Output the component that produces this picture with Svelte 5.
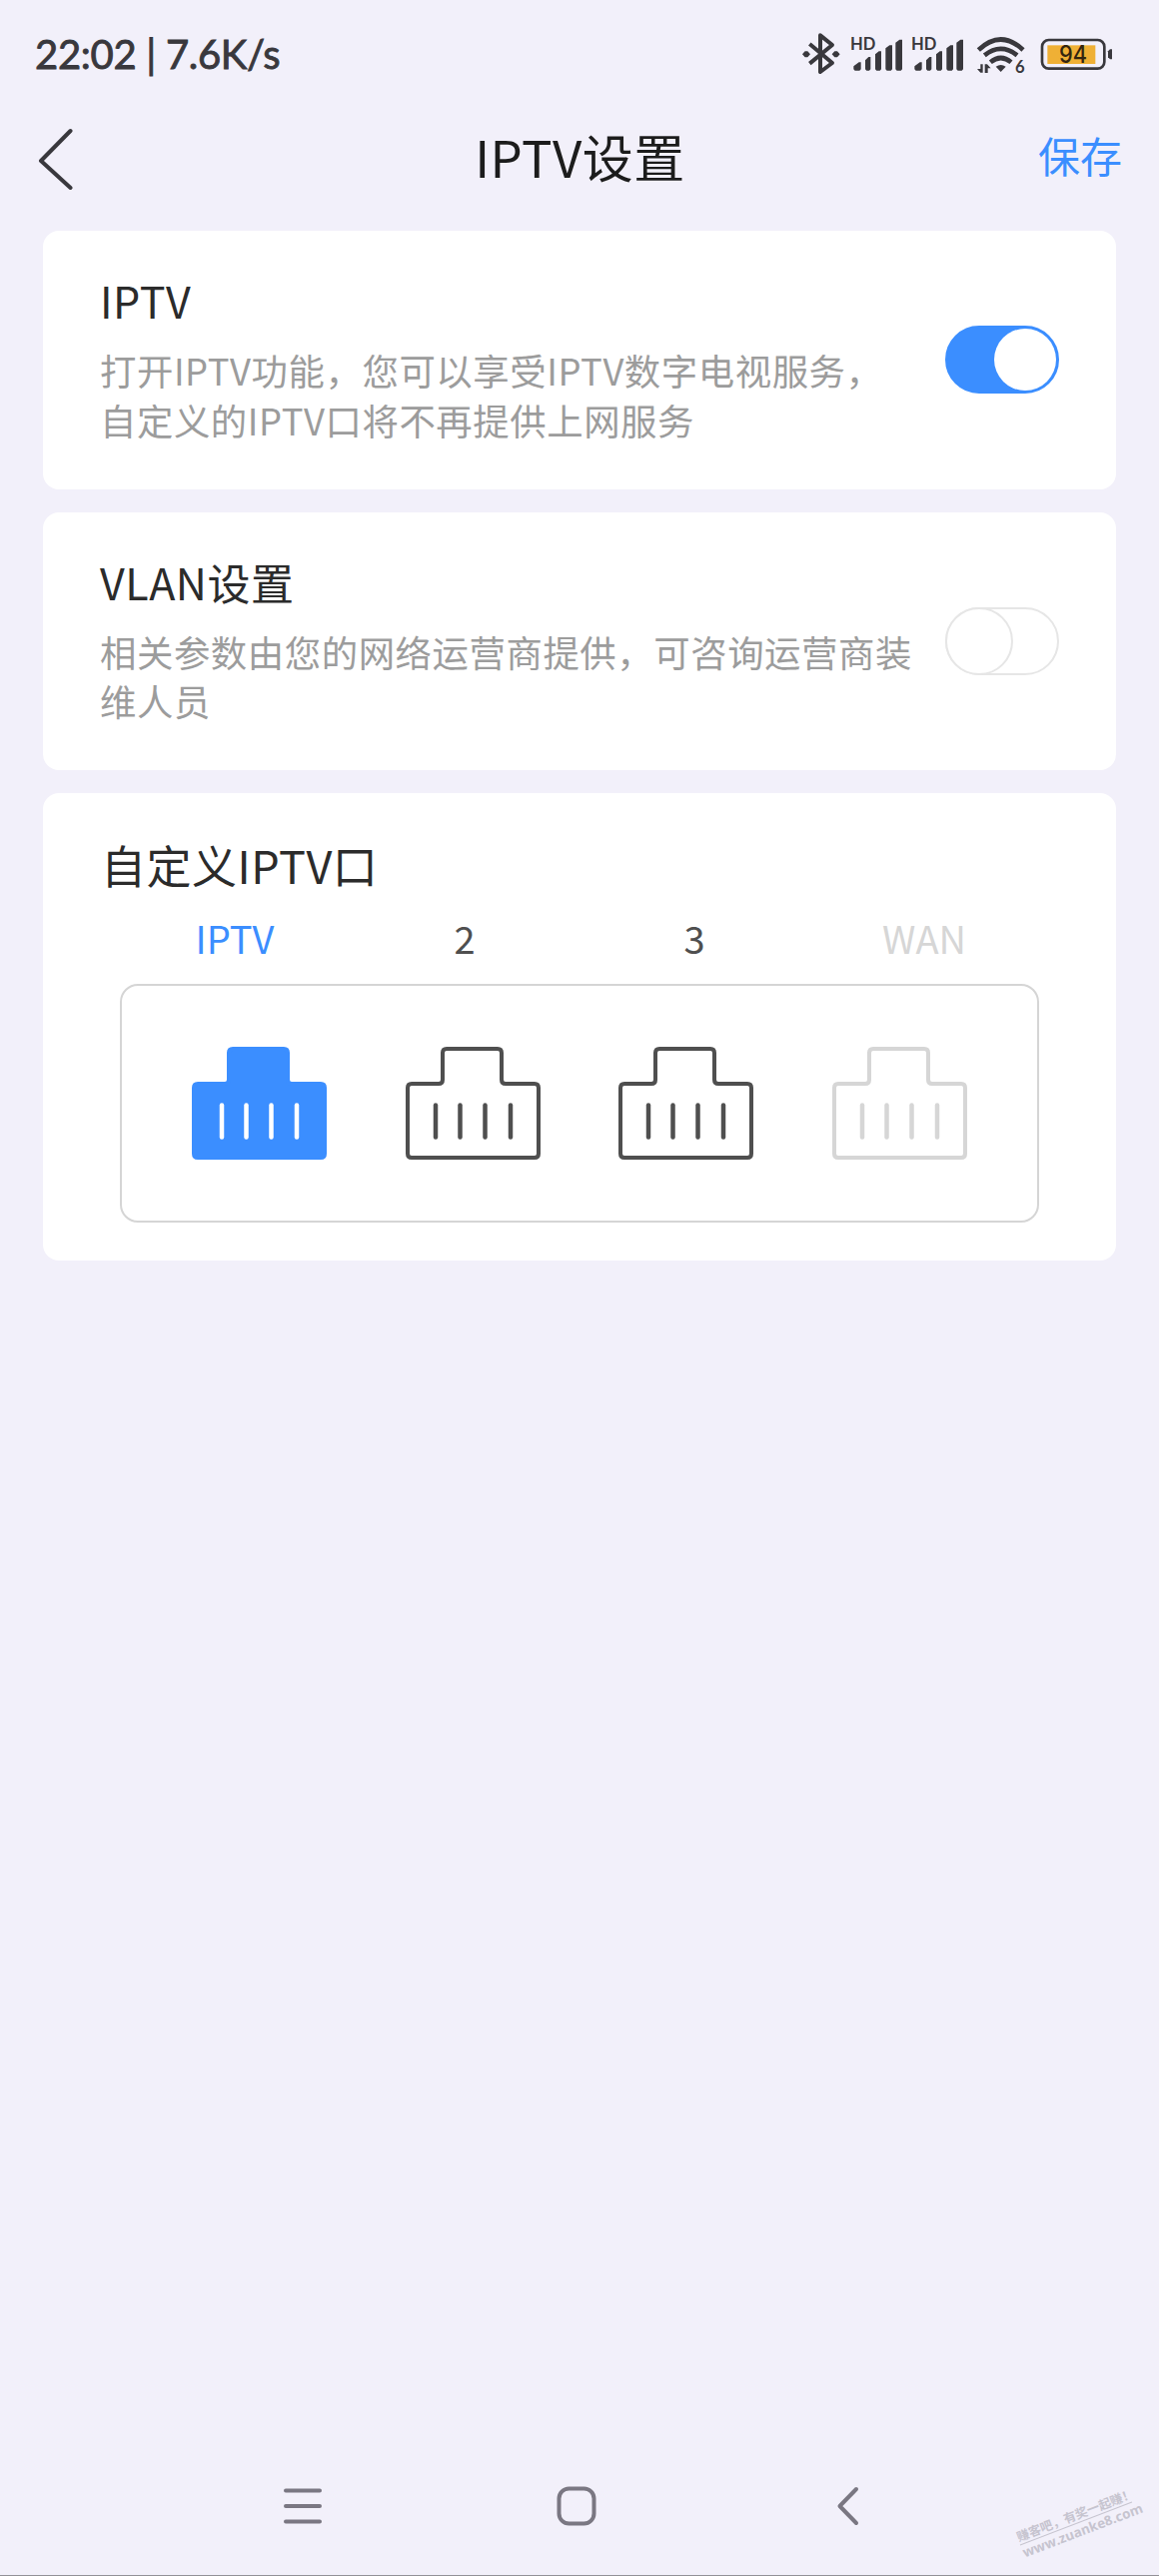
<script lang="ts">
  let iptvEnabled = $state(true);
  let vlanEnabled = $state(false);

  type Port = { label: string; disabled: boolean };

  const ports: Port[] = [
    { label: "IPTV", disabled: false },
    { label: "2", disabled: false },
    { label: "3", disabled: false },
    { label: "WAN", disabled: true },
  ];
  let selected = $state("IPTV");

  const pins = [30, 54.5, 79.5, 105];

  function portState(port: Port) {
    if (port.disabled) return "disabled";
    return port.label === selected ? "active" : "";
  }
</script>

{#snippet signal()}
  <svg viewBox="212 40 160 126" width="53.33" height="42">
    <text x="212" y="92" font-size="50" font-weight="700" textLength="76" lengthAdjust="spacingAndGlyphs">HD</text>
    <path
      d="M222 149V140L238 128H244V149L240 153H226ZM257 149V122L267 112H273V149L269 153H261ZM287 149V104L298 95H305V149L301 153H291ZM318 149V86L330 77H338V149L334 153H322ZM348 149V69L360 60H368V149L364 153H352Z"
    />
  </svg>
{/snippet}

{#snippet toggle(on: boolean, label: string, flip: () => void)}
  <button class="toggle" class:on role="switch" aria-checked={on} aria-label={label} onclick={flip}>
    <span class="knob"></span>
  </button>
{/snippet}

<div class="screen">
  <div class="status">
    <span class="clock">22:02 | 7.6K/s</span>
    <div class="tray">
      <svg viewBox="68 40 119 126" width="39.67" height="42">
        <path
          d="M90 73L158 130L122 157V47L158 76L90 132"
          fill="none"
          stroke="currentColor"
          stroke-width="12"
          stroke-linejoin="round"
        />
        <path d="M68 104L76 95H84L92 104L84 113H76ZM157 104L165 95H173L181 104L173 113H165Z" />
      </svg>
      {@render signal()}
      {@render signal()}
      <svg viewBox="582 40 175 126" width="58.33" height="42">
        <g fill="none" stroke="currentColor" stroke-width="14">
          <path d="M598 91Q665 28 732 91" />
          <path d="M616 107Q665 68 714 107" />
          <path d="M634 128Q665 102 696 128" />
        </g>
        <path d="M650 141Q665 131 680 141L665 157Z" />
        <path d="M604 134H611V159H604L594 148H604ZM617 134H624L635 146H626V160H617Z" />
        <text x="708" y="159" font-size="50" font-weight="700">6</text>
      </svg>
      <svg viewBox="782 40 220 126" width="73.33" height="42">
        <rect x="788" y="61" width="187" height="86" rx="20" fill="none" stroke="currentColor" stroke-width="8" />
        <rect x="804" y="77" width="144" height="56" fill="#efb035" />
        <path d="M986 95L992 89H998V119H992L986 113Z" />
        <text class="level" x="839" y="131" font-size="73" textLength="84" lengthAdjust="spacingAndGlyphs">94</text>
      </svg>
    </div>
  </div>

  <header>
    <button class="back" aria-label="返回">
      <svg viewBox="0 0 36 62" width="36" height="62">
        <path d="M32.500 3L3 33L32.500 60" />
      </svg>
    </button>
    <h1>IPTV设置</h1>
    <button class="save">保存</button>
  </header>

  <main>
    <section class="card row">
      <div class="text">
        <h2>IPTV</h2>
        <p>打开IPTV功能，您可以享受IPTV数字电视服务，自定义的IPTV口将不再提供上网服务</p>
      </div>
      {@render toggle(iptvEnabled, "IPTV", () => (iptvEnabled = !iptvEnabled))}
    </section>

    <section class="card row">
      <div class="text">
        <h2>VLAN设置</h2>
        <p>相关参数由您的网络运营商提供，可咨询运营商装维人员</p>
      </div>
      {@render toggle(vlanEnabled, "VLAN设置", () => (vlanEnabled = !vlanEnabled))}
    </section>

    <section class="card ports">
      <h2>自定义IPTV口</h2>
      <div class="labels">
        {#each ports as port}
          <span class={portState(port)}>{port.label}</span>
        {/each}
      </div>
      <div class="panel">
        {#each ports as port}
          <button
            class="port {portState(port)}"
            aria-label={port.label}
            disabled={port.disabled}
            onclick={() => (selected = port.label)}
          >
            <svg viewBox="0 0 135 113" width="135" height="113">
              <path
                class="shell"
                d="M41 2H92Q96 2 96 6V33Q96 37 100 37H129Q133 37 133 41V107Q133 111 129 111H6Q2 111 2 107V41Q2 37 6 37H33Q37 37 37 33V6Q37 2 41 2Z"
              />
              {#each pins as x}
                <path class="pin" d="M{x} 58.500V90.500" />
              {/each}
            </svg>
          </button>
        {/each}
      </div>
    </section>
  </main>

  <nav>
    <svg viewBox="0 0 40 40" width="40" height="40">
      <path d="M3 4.500H37M3 20H37M3 35.500H37" />
    </svg>
    <svg viewBox="0 0 40 40" width="40" height="40">
      <rect x="2.500" y="2.500" width="35" height="35" rx="10" />
    </svg>
    <svg viewBox="0 0 40 40" width="40" height="40">
      <path d="M26 3L9.500 20L26 37" />
    </svg>
  </nav>

  <div class="watermark">
    <span>赚客吧，有奖一起赚！</span>
    <span class="site">www.zuanke8.com</span>
  </div>
</div>

<style>
  :global(body) {
    background: #f2f0fa;
  }

  .screen {
    position: relative;
    box-sizing: border-box;
    width: 1160px;
    height: 2579px;
    display: flex;
    flex-direction: column;
    overflow: hidden;
    background: #f2f0fa;
    border-bottom: 1px solid #929197;
    font-family: "Noto Sans CJK SC", sans-serif;
    color: #2b2b2b;
  }

  button {
    padding: 0;
    border: none;
    background: none;
    font: inherit;
    color: inherit;
  }

  svg {
    display: block;
    flex: none;
  }

  h1,
  h2,
  p {
    margin: 0;
    font-weight: 400;
  }

  .status {
    height: 108px;
    padding: 0 46px 0 35px;
    display: flex;
    justify-content: space-between;
    align-items: center;
    box-sizing: border-box;
    color: #39383d;
  }

  .clock {
    font-family: Lato, sans-serif;
    font-size: 40px;
    letter-spacing: -0.3px;
    white-space: pre;
    -webkit-text-stroke: 0.9px currentColor;
  }

  .tray {
    display: flex;
    gap: 8.300px;
  }

  .tray svg {
    fill: currentColor;
    overflow: visible;
  }

  .tray text {
    font-family: Lato, sans-serif;
  }

  .tray .level {
    font-family: Inter, sans-serif;
    font-weight: 500;
    fill: #33250f;
  }

  header {
    height: 123px;
    padding: 0 37px 0 38px;
    display: grid;
    grid-template-columns: 84px 1fr 84px;
    box-sizing: border-box;
  }

  .back {
    justify-self: start;
    align-self: start;
    margin-top: 20px;
  }

  .back svg {
    fill: none;
    stroke: #39383d;
    stroke-width: 4;
    stroke-linecap: round;
    stroke-linejoin: round;
  }

  h1 {
    text-align: center;
    font-size: 51px;
    letter-spacing: 0.5px;
    line-height: 96px;
    color: #1c1c1c;
  }

  .save {
    align-self: start;
    font-size: 42px;
    line-height: 94px;
    color: #3b8eff;
  }

  main {
    flex: 1;
    padding: 0 43px;
    display: flex;
    flex-direction: column;
    gap: 23px;
  }

  .card {
    box-sizing: border-box;
    background: #fff;
    border-radius: 16px;
  }

  .row {
    height: 258.500px;
    padding: 0 57px;
    display: flex;
    justify-content: space-between;
  }

  .text {
    width: 817px;
    padding-top: 37px;
  }

  h2 {
    font-size: 43px;
    letter-spacing: 0.5px;
    line-height: 64px;
  }

  .text p {
    margin-top: 14px;
    font-size: 36.400px;
    letter-spacing: 0.560px;
    line-height: 49.600px;
    color: #9c9c9c;
  }

  .toggle {
    flex: none;
    box-sizing: border-box;
    width: 114px;
    height: 68px;
    margin-top: 95px;
    display: flex;
    border: 2px solid #e6e6e6;
    border-radius: 34px;
    background: #fff;
  }

  .knob {
    box-sizing: border-box;
    width: 68px;
    height: 68px;
    margin: -2px;
    border: 2px solid #e6e6e6;
    border-radius: 50%;
    background: #fff;
  }

  .toggle.on {
    justify-content: flex-end;
    border-color: #3b8eff;
    background: #3b8eff;
  }

  .toggle.on .knob {
    width: 62px;
    height: 62px;
    margin: 1px;
    border: none;
  }

  .ports {
    height: 468px;
    padding: 38px 77px 0;
  }

  .ports h2 {
    margin-left: -19px;
    font-size: 45px;
    line-height: 68px;
  }

  .labels {
    display: grid;
    grid-template-columns: repeat(4, 1fr);
    margin-top: 12px;
    text-align: center;
    font-size: 38px;
    line-height: 54px;
    color: #4f4f4f;
  }

  .labels .active {
    color: #3b8eff;
  }

  .labels .disabled {
    color: #d6d6d6;
  }

  .panel {
    box-sizing: border-box;
    height: 239px;
    margin-top: 19px;
    padding: 0 70px;
    display: flex;
    justify-content: space-between;
    align-items: center;
    border: 2.500px solid #d5d5d5;
    border-radius: 18px;
  }

  .port {
    color: #4f4f4f;
  }

  .port.active {
    color: #3b8eff;
  }

  .port.disabled {
    color: #d6d6d6;
  }

  .shell,
  .pin {
    fill: none;
    stroke: currentColor;
    stroke-width: 4;
    stroke-linecap: round;
  }

  .pin {
    stroke-width: 4.500;
  }

  .active .shell {
    fill: currentColor;
  }

  .active .pin {
    stroke: #fff;
  }

  nav {
    height: 89px;
    padding: 0 289px 0 283px;
    display: flex;
    justify-content: space-between;
  }

  nav svg {
    fill: none;
    stroke: #7a7782;
    stroke-width: 4;
    stroke-linecap: round;
    stroke-linejoin: round;
  }

  .watermark {
    position: absolute;
    left: 1017px;
    top: 2509px;
    width: 120px;
    display: flex;
    flex-direction: column;
    transform: rotate(-21deg);
    font-size: 12.500px;
    font-weight: 700;
    line-height: 17px;
    color: #c6c4cf;
    white-space: nowrap;
  }

  .site {
    border-top: 1px solid #c6c4cf;
    font-family: "Open Sans", sans-serif;
    font-size: 13.500px;
  }
</style>
